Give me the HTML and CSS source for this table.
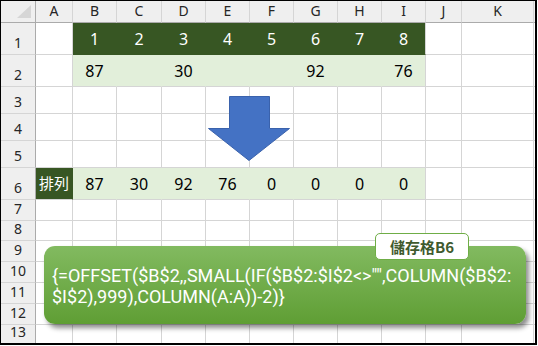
FILE: index.html
```html
<!DOCTYPE html>
<html lang="zh-Hant">
<head>
<meta charset="utf-8">
<title>OFFSET SMALL 排列</title>
<link rel="stylesheet" href="styles.css">
</head>
<body>
<div class="sheet">
  <div class="row hdr"><span class="corner"></span><span>A</span><span>B</span><span>C</span><span>D</span><span>E</span><span>F</span><span>G</span><span>H</span><span>I</span><span>J</span><span>K</span><span class="end"></span></div>
  <div class="row h32"><span class="rh">1</span><span></span><span class="dk">1</span><span class="dk">2</span><span class="dk">3</span><span class="dk">4</span><span class="dk">5</span><span class="dk">6</span><span class="dk">7</span><span class="dk last">8</span><span></span><span></span><span class="end"></span></div>
  <div class="row h32"><span class="rh">2</span><span></span><span class="lt">87</span><span class="lt"></span><span class="lt">30</span><span class="lt"></span><span class="lt"></span><span class="lt">92</span><span class="lt"></span><span class="lt last">76</span><span></span><span></span><span class="end"></span></div>
  <div class="row h27"><span class="rh">3</span><span></span><span></span><span></span><span></span><span></span><span></span><span></span><span></span><span></span><span></span><span></span><span class="end"></span></div>
  <div class="row h27"><span class="rh">4</span><span></span><span></span><span></span><span></span><span></span><span></span><span></span><span></span><span></span><span></span><span></span><span class="end"></span></div>
  <div class="row h27"><span class="rh">5</span><span></span><span></span><span></span><span></span><span></span><span></span><span></span><span></span><span></span><span></span><span></span><span class="end"></span></div>
  <div class="row h32"><span class="rh">6</span><span class="dk label">排列</span><span class="lt">87</span><span class="lt">30</span><span class="lt">92</span><span class="lt">76</span><span class="lt">0</span><span class="lt">0</span><span class="lt">0</span><span class="lt last">0</span><span></span><span></span><span class="end"></span></div>
  <div class="row h21"><span class="rh">7</span><span></span><span></span><span></span><span></span><span></span><span></span><span></span><span></span><span></span><span></span><span></span><span class="end"></span></div>
  <div class="row h20"><span class="rh">8</span><span></span><span></span><span></span><span></span><span></span><span></span><span></span><span></span><span></span><span></span><span></span><span class="end"></span></div>
  <div class="row h21"><span class="rh">9</span><span></span><span></span><span></span><span></span><span></span><span></span><span></span><span></span><span></span><span></span><span></span><span class="end"></span></div>
  <div class="row h21"><span class="rh">10</span><span></span><span></span><span></span><span></span><span></span><span></span><span></span><span></span><span></span><span></span><span></span><span class="end"></span></div>
  <div class="row h21"><span class="rh">11</span><span></span><span></span><span></span><span></span><span></span><span></span><span></span><span></span><span></span><span></span><span></span><span class="end"></span></div>
  <div class="row h21"><span class="rh">12</span><span></span><span></span><span></span><span></span><span></span><span></span><span></span><span></span><span></span><span></span><span></span><span class="end"></span></div>
  <div class="row h18 lastrow"><span class="rh">13</span><span></span><span></span><span></span><span></span><span></span><span></span><span></span><span></span><span></span><span></span><span></span><span class="end"></span></div>

  <svg class="arrow" width="83" height="66" viewBox="0 0 83 66" aria-hidden="true">
    <polygon points="21.5,0.5 61.5,0.5 61.5,32.5 81.5,32.5 41,64.5 0.5,32.5 21.5,32.5" fill="#4472C4" stroke="#3A62AC" stroke-width="1"/>
  </svg>

  <div class="formula">
    <p>{=OFFSET($B$2,,SMALL(IF($B$2:$I$2&lt;&gt;"",COLUMN($B$2:<br>$I$2),999),COLUMN(A:A))-2)}</p>
  </div>
  <div class="tag">儲存格B6</div>
</div>
</body>
</html>
```

FILE: styles.css
```css
* { box-sizing: border-box; }
html, body { margin: 0; padding: 0; background: #fff; }
body {
  font-family: "Noto Sans", "Noto Sans CJK TC", sans-serif;
  color: #000;
}
.sheet {
  position: relative;
  width: 537px;
  height: 345px;
  border-style: solid;
  border-color: #000;
  border-width: 1px 2px 2px 1px;
  overflow: hidden;
}
.row {
  display: grid;
  grid-template-columns: 35px 37px 44px 45px 44px 44px 44px 44px 44px 44px 36px 72px 1fr;
}
.row > span {
  display: flex;
  align-items: center;
  justify-content: center;
  border-right: 1px solid #d5d5d5;
  border-bottom: 1px solid #d5d5d5;
  font-size: 16px;
  line-height: 1;
}
.row > span.end { border-right: none; }
.lastrow > span { border-bottom: none; }

.hdr { height: 22px; }
.h32 { height: 32px; }
.h27 { height: 27px; }
.h21 { height: 21px; }
.h20 { height: 20px; }
.h18 { height: 18px; }

.hdr > span {
  background: #efefef;
  border-bottom-color: #ababab;
  font-size: 14px;
  color: #262626;
  padding-bottom: 2px;
}
.hdr > span.corner {
  position: relative;
  border-right-color: #ababab;
}
.hdr > span.corner::after {
  content: "";
  position: absolute;
  right: 4px;
  bottom: 4px;
  width: 0;
  height: 0;
  border-style: solid;
  border-width: 0 0 13px 14px;
  border-color: transparent transparent #d6d6d6 transparent;
}
.row > span.rh {
  background: #efefef;
  border-right-color: #ababab;
  align-items: flex-end;
  font-size: 14px;
  color: #262626;
  padding-bottom: 4px;
}
.row > span.dk {
  background: #375623;
  border-right-color: #375623;
  border-bottom-color: #375623;
  color: #fff;
}
.row > span.lt {
  background: #e2efda;
  border-right-color: #e2efda;
}
.row > span.last { border-right-color: #d5d5d5; }
.row > span.label {
  font-size: 15px;
  justify-content: center;
  border-bottom-color: #d5d5d5;
}

.arrow {
  position: absolute;
  left: 207px;
  top: 95px;
}

.formula {
  position: absolute;
  left: 43px;
  top: 245px;
  width: 482px;
  height: 78px;
  border-radius: 11px;
  background: linear-gradient(#82ba60, #5f9e34);
  box-shadow: 3px 4px 5px rgba(0, 0, 0, 0.45);
  display: flex;
  align-items: center;
  padding: 2px 0 0 8px;
}
.formula p {
  margin: 0;
  color: #fff;
  font-family: Roboto, "Noto Sans CJK TC", sans-serif;
  font-size: 18px;
  line-height: 21px;
  white-space: nowrap;
}
.tag {
  position: absolute;
  left: 374px;
  top: 232px;
  width: 94px;
  height: 27px;
  background: #fff;
  border: 1px solid #6fad46;
  border-radius: 5px;
  display: flex;
  align-items: center;
  justify-content: center;
  font-family: "Noto Sans CJK TC", sans-serif;
  font-weight: 700;
  font-size: 15px;
  color: #3f5a2e;
}
```
